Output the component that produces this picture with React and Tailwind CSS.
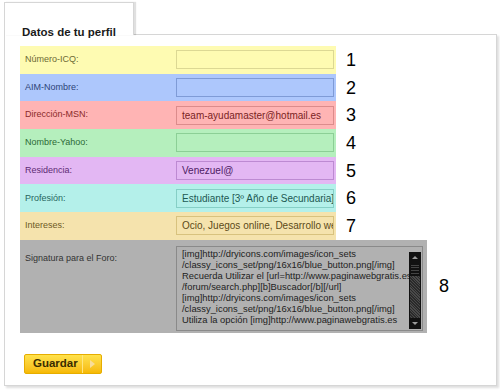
import React from "react";

const rows = [
  { label: "Número-ICQ:", value: "", bg: "bg-[#fefbb2]", lab: "text-[#6d6a34]", inp: "border-[#dcd894] text-[#5a5620]", n: "1" },
  { label: "AIM-Nombre:", value: "", bg: "bg-[#adc7fc]", lab: "text-[#2e4478]", inp: "border-[#7f9bd6] text-[#22386a]", n: "2" },
  { label: "Dirección-MSN:", value: "team-ayudamaster@hotmail.es", bg: "bg-[#ffb4b4]", lab: "text-[#8a2b2b]", inp: "border-[#dc8c8c] text-[#7a1f1f]", n: "3" },
  { label: "Nombre-Yahoo:", value: "", bg: "bg-[#b5efbd]", lab: "text-[#2c6a36]", inp: "border-[#8ccf96] text-[#215a2a]", n: "4" },
  { label: "Residencia:", value: "Venezuel@", bg: "bg-[#e3b7f3]", lab: "text-[#5e2b74]", inp: "border-[#bd8ad2] text-[#4e2064]", n: "5" },
  { label: "Profesión:", value: "Estudiante [3º Año de Secundaria]", bg: "bg-[#b4f0ea]", lab: "text-[#27665f]", inp: "border-[#86cfc6] text-[#1d5952]", n: "6" },
  { label: "Intereses:", value: "Ocio, Juegos online, Desarrollo web", bg: "bg-[#f5e3ad]", lab: "text-[#6e5a25]", inp: "border-[#d8c27e] text-[#5c4a18]", n: "7" },
];

const sig = [
  "[img]http://dryicons.com/images/icon_sets",
  "/classy_icons_set/png/16x16/blue_button.png[/img]",
  "Recuerda Utilizar el [url=http://www.paginawebgratis.es",
  "/forum/search.php][b]Buscador[/b][/url]",
  "[img]http://dryicons.com/images/icon_sets",
  "/classy_icons_set/png/16x16/blue_button.png[/img]",
  "Utiliza la opción [img]http://www.paginawebgratis.es",
];

export default function App() {
  return (
    <div className="w-[500px] h-[390px] bg-white font-['Liberation_Sans',Arial,sans-serif] overflow-hidden">
      <div className="pl-[4px] pt-[2px]">
        <div className="relative z-10 w-[130px] h-[33px] -mb-px bg-white border border-b-0 border-[#d6d6d6] shadow-[2px_0_1px_rgba(0,0,0,0.12)] pl-[17px] pt-[16px]">
          <span className="text-[11.5px] font-bold text-[#1a1a1a] leading-none">Datos de tu perfil</span>
        </div>
        <div className="w-[493px] h-[352px] bg-white border border-[#d6d6d6] shadow-[2px_2px_2px_rgba(0,0,0,0.13)] pl-[15px] pt-[11px]">
          {rows.map((r) => (
            <div key={r.n} className="flex items-center h-[27.7px]">
              <div className={`flex items-center w-[316px] h-full ${r.bg}`}>
                <div className={`w-[156px] pl-[5px] text-[9px] ${r.lab}`}>{r.label}</div>
                <div className={`w-[158px] h-[19px] border ${r.inp} flex items-center pl-[5px] text-[10px] overflow-hidden whitespace-nowrap`}>
                  {r.value}
                </div>
              </div>
              <div className="ml-[10px] text-[18px] leading-none text-black">{r.n}</div>
            </div>
          ))}
          <div className="flex items-center">
            <div className="flex w-[407px] h-[93px] bg-[#b1b1b1] pt-[6px]">
              <div className="w-[156px] pl-[5px] pt-[6px] text-[9px] text-[#333]">Signatura para el Foro:</div>
              <div className="relative w-[247px] h-[85px] border border-[#8a8a8a] overflow-hidden pl-[5px] pt-[1px] text-[9.4px] leading-[11px] text-[#222]">
                {sig.map((s, i) => (
                  <div key={i} className="whitespace-nowrap">{s}</div>
                ))}
                <div className="absolute right-[1px] top-[5px] bottom-[1px] w-[12px] bg-[#111] flex flex-col items-center">
                  <div className="mt-[4px] w-0 h-0 border-l-[3px] border-r-[3px] border-b-[3px] border-l-transparent border-r-transparent border-b-[#9a9a9a]"></div>
                  <div className="mt-[6px] w-[8px] h-[9px] flex flex-col justify-between">
                    <div className="h-px bg-[#444]"></div>
                    <div className="h-px bg-[#444]"></div>
                    <div className="h-px bg-[#444]"></div>
                    <div className="h-px bg-[#444]"></div>
                  </div>
                  <div className="mt-[2px] flex-1 w-[10px] bg-[repeating-linear-gradient(45deg,#2a2a2a_0,#2a2a2a_1px,#4a4a4a_1px,#4a4a4a_2px)]"></div>
                  <div className="my-[4px] w-0 h-0 border-l-[3px] border-r-[3px] border-t-[3px] border-l-transparent border-r-transparent border-t-[#9a9a9a]"></div>
                </div>
              </div>
            </div>
            <div className="ml-[12px] text-[18px] leading-none text-black">8</div>
          </div>
          <div className="mt-[21px] ml-[4px] flex items-center w-[78px] h-[20px] rounded-[2px] border border-[#e6ad00] bg-gradient-to-b from-[#ffe24a] to-[#f6b900]">
            <div className="w-[57px] pl-[8px] text-[11.5px] font-bold text-[#3a2c00]">Guardar</div>
            <div className="w-px h-full bg-[#ffe680]"></div>
            <div className="flex-1 flex items-center justify-center">
              <div className="w-0 h-0 border-t-[4px] border-b-[4px] border-l-[5px] border-t-transparent border-b-transparent border-l-[#f8dd9a]"></div>
            </div>
          </div>
        </div>
      </div>
    </div>
  );
}
